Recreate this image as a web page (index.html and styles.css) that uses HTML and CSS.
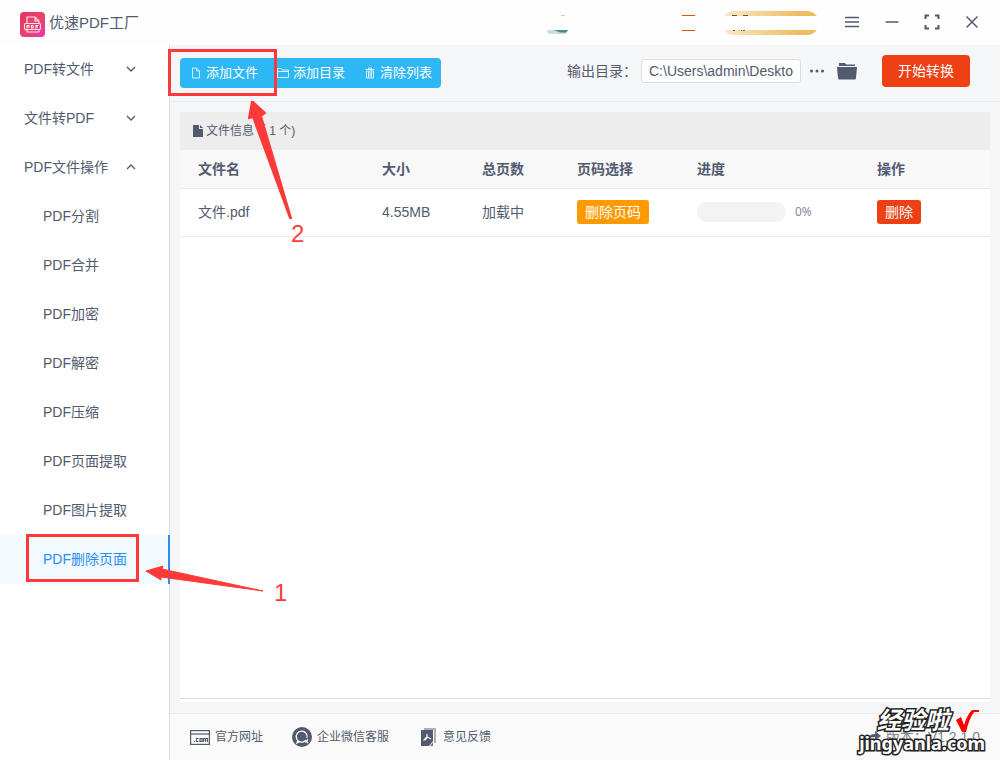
FILE: index.html
```html
<!DOCTYPE html>
<html lang="zh-CN">
<head>
<meta charset="utf-8">
<meta name="viewport" content="width=device-width, initial-scale=1">
<title>优速PDF工厂</title>
<link rel="stylesheet" href="styles.css">
</head>
<body>
<div class="app">
  <header class="titlebar">
    <svg class="logo" viewBox="0 0 25 25" aria-hidden="true">
      <defs><linearGradient id="lg" x1="0" y1="0" x2="1" y2="1"><stop offset="0" stop-color="#e5325f"/><stop offset=".55" stop-color="#e9446f"/><stop offset="1" stop-color="#ee35a8"/></linearGradient></defs>
      <rect width="25" height="25" rx="4" fill="url(#lg)"/>
      <g fill="none" stroke="#ffe3ea" stroke-width="1.1"><path d="M7 11V5h8l4 4v2M15 5v4h4M7 18v2h12v-2"/><rect x="4.500" y="11.500" width="16" height="6" rx="1"/><path d="M7 16.500v-3h2v1.500H7M11.500 13.500v2.500h1l1-1v-.5l-1-1zM16 16.500v-3h2.500M16 15h2"/></g>
    </svg>
    <h1 class="app-name">优速PDF工厂</h1>
    <div class="account">
      <svg class="avatar" viewBox="0 0 24 24" aria-hidden="true"><path d="M2 19h21q-1 4-4 4H6q-4 0-4-4z" fill="#c9dedf"/><path d="M2 19h7l11 2.500 3-2.500H8z" fill="#458e93"/><path d="M9 19h14l-2 2.500h-6z" fill="#458e93"/><path d="M16 4.500h4" stroke="#ccc"/></svg>
      <svg class="badge-lines" viewBox="0 0 14 24" aria-hidden="true"><path d="M1 4.500h13M1 19.500h13" stroke="#ec4a1c"/></svg>
      <span class="vip"><svg class="vip-mark" viewBox="0 0 24 24" aria-hidden="true"><path d="M2 4.500h5M13 4.500h5M3 19.500h2M11 19.500h1M13 19.500h2" stroke="#795033"/></svg></span>
    </div>
    <nav class="window-controls" aria-label="窗口">
      <button aria-label="菜单"><svg viewBox="0 0 16 16"><path d="M1 3.500h14M1 8h14M1 12.500h14"/></svg></button>
      <button aria-label="最小化"><svg viewBox="0 0 16 16"><path d="M1.500 8h13"/></svg></button>
      <button aria-label="最大化"><svg viewBox="0 0 16 16"><path stroke-width="2" d="M1.500 5V1.500H5M11 1.500h3.500V5M1.500 11v3.500H5M11 14.500h3.500V11"/></svg></button>
      <button aria-label="关闭"><svg viewBox="0 0 16 16"><path d="M2.500 2.500l11 11M13.500 2.500l-11 11"/></svg></button>
    </nav>
  </header>

  <aside class="sidebar">
    <button class="group">PDF转文件<svg viewBox="0 0 10 10"><path d="M1 3l4 4 4-4"/></svg></button>
    <button class="group">文件转PDF<svg viewBox="0 0 10 10"><path d="M1 3l4 4 4-4"/></svg></button>
    <button class="group" aria-expanded="true">PDF文件操作<svg viewBox="0 0 10 10"><path d="M1 7l4-4 4 4"/></svg></button>
    <nav class="submenu">
      <a href="#split">PDF分割</a>
      <a href="#merge">PDF合并</a>
      <a href="#encrypt">PDF加密</a>
      <a href="#decrypt">PDF解密</a>
      <a href="#compress">PDF压缩</a>
      <a href="#pages">PDF页面提取</a>
      <a href="#images">PDF图片提取</a>
      <a class="active" href="#delete" aria-current="page">PDF删除页面</a>
    </nav>
  </aside>

  <main class="workspace">
    <div class="toolbar">
      <div class="actions">
        <button><svg viewBox="0 0 12 12"><path d="M2.500 1h4l3 3v7h-7zM6.500 1v3h3"/></svg>添加文件</button>
        <button><svg viewBox="0 0 12 12"><path d="M.5 10.500V1.500h4l1 1.500h6v7.500zM.5 4.500h11"/></svg>添加目录</button>
        <button><svg viewBox="0 0 12 12"><path d="M1.500 2.500h9M4.500 2V1h3v1M2.500 4v7h7V4zM4.500 4.500v6M6 4.500v6M7.500 4.500v6"/></svg>清除列表</button>
      </div>
      <div class="output">
        <label for="dir">输出目录：</label>
        <input id="dir" type="text" value="C:\Users\admin\Deskto">
        <button class="more" aria-label="更多"><svg viewBox="0 0 16 16"><circle cx="2.500" cy="8" r="1.500"/><circle cx="8" cy="8" r="1.500"/><circle cx="13.500" cy="8" r="1.500"/></svg></button>
        <button class="folder" aria-label="打开文件夹"><svg viewBox="0 0 20 18"><path d="M2 4V1h6l1 1.500h9V4z"/><path d="M0 5h20l-1 11q0 1.500-1.500 1.500h-15Q1 17.500 1 16z"/></svg></button>
        <button class="start">开始转换</button>
      </div>
    </div>

    <section class="panel">
      <h2 class="panel-title"><svg viewBox="0 0 12 14"><path d="M1 1h6v4h4v8H1z"/><path d="M8 1l3 3H8z"/></svg>文件信息（ 1 个)</h2>
      <table class="files">
        <colgroup><col><col class="c-size"><col class="c-pages"><col class="c-range"><col class="c-progress"><col class="c-action"></colgroup>
        <thead><tr><th>文件名</th><th>大小</th><th>总页数</th><th>页码选择</th><th>进度</th><th>操作</th></tr></thead>
        <tbody><tr>
          <td>文件.pdf</td><td>4.55MB</td><td>加载中</td>
          <td><button class="tag orange">删除页码</button></td>
          <td><div class="progress"><span class="track"></span><span class="percent">0%</span></div></td>
          <td><button class="tag red">删除</button></td>
        </tr></tbody>
      </table>
    </section>

    <footer class="footer">
      <a href="#site"><svg viewBox="0 0 20 20"><g fill="none" stroke="#515a6e" stroke-width="1.200"><rect x=".6" y="3.600" width="18.800" height="13.800"/><path d="M1 7h18"/><path d="M4 14.500h1M8.500 11.500h-2v3h2M10 11.500h2v3h-2zM13.500 15v-3.500h4V15M15.500 11.500V15"/></g></svg>官方网址</a>
      <a href="#wechat"><svg viewBox="0 0 20 20"><circle cx="10" cy="10" r="10" fill="#515a6e"/><g fill="none" stroke="#fff" stroke-width="1.300"><path d="M13 14a5.500 5.500 0 1 1 2-3M6 13l-1 3 3-1.500"/><path d="M13 13l3 3M16 12.500l-2.500 3"/></g></svg>企业微信客服</a>
      <a href="#feedback"><svg viewBox="0 0 20 20"><path d="M6 2h11v14" fill="none" stroke="#9197a4" stroke-width="1.500"/><path d="M3 3h12v11l-4 5H3z" fill="#515a6e"/><path d="M15 15v4h-3z" fill="#737b8b"/><path d="M9 7v3q-1 3-3 3 2-2.500 3-3 2 .5 4 2" fill="none" stroke="#fff" stroke-width="1.200"/></svg>意见反馈</a>
      <span class="version"><svg viewBox="0 0 14 14" aria-hidden="true"><path d="M1 9q1-5 7-5V1l6 5-6 4V7Q4 7 1 9z"/></svg>版本：V1.2.1.0</span>
    </footer>
  </main>

  <div class="mark mark-add"></div>
  <div class="mark mark-delete"></div>
  <svg class="arrow arrow-two" viewBox="0 0 44 118" aria-hidden="true"><path d="M4 0L17 12l-4 3L43 117h-1L5 16l-4 1z"/></svg>
  <svg class="arrow arrow-one" viewBox="0 0 120 28" aria-hidden="true"><path d="M1 6L18 1l-1 3L118 26 16 12v3z"/></svg>
  <span class="step step-two">2</span>
  <span class="step step-one">1</span>
  <div class="watermark">
    <span class="wm-name">经验啦</span>
    <svg class="wm-check" viewBox="0 0 24 24" aria-hidden="true"><path d="M1 11l5-3 3 8Q12 6 17 1h7v2h-5Q14 10 11 23H7z"/></svg>
    <span class="wm-site">jingyanla.com</span>
  </div>
</div>
</body>
</html>
```
FILE: styles.css
```css
* { box-sizing: border-box; }
body {
  margin: 0;
  color: #515a6e;
  font: 14px/20px "Liberation Sans", "Noto Sans CJK SC", sans-serif;
}
button, input { font: inherit; color: inherit; }
button { border: 0; padding: 0; background: none; cursor: pointer; white-space: nowrap; }
a { color: inherit; text-decoration: none; }
svg { flex: none; }
.app {
  position: relative;
  min-height: 100vh;
  display: grid;
  grid-template: 45px 1fr / 170px minmax(0, 1fr);
  background: #fff;
}

.titlebar {
  grid-column: 1 / -1;
  display: flex;
  align-items: center;
  padding: 0 8px 0 20px;
  background: #fefefe;
}
.logo { width: 25px; height: 25px; margin-top: 3px; }
.app-name { margin: 0 auto 0 4px; font-size: 15px; font-weight: 400; }
.account { display: flex; align-items: center; padding-top: 1px; margin-right: 13px; }
.avatar { width: 24px; height: 24px; margin-right: 112px; }
.badge-lines { width: 14px; height: 24px; margin-right: 27px; }
.vip {
  width: 97px;
  height: 24px;
  border-radius: 12px;
  background: linear-gradient(#fff, #fff) 0 5px / 100% 14px no-repeat, linear-gradient(90deg, #fbe8ca, #edbd60 80%);
}
.vip-mark { display: block; width: 24px; height: 24px; margin-left: 8px; }
.window-controls { display: flex; padding-bottom: 2px; }
.window-controls button { width: 40px; height: 40px; display: grid; place-items: center; }
.window-controls svg { width: 16px; height: 16px; fill: none; stroke: #515a6e; stroke-width: 1.5; }

.sidebar { border-right: 1px solid #dcdee2; }
.group {
  width: 100%;
  height: 49px;
  padding: 0 33px 1px 24px;
  display: flex;
  align-items: center;
  justify-content: space-between;
}
.group svg { width: 10px; height: 10px; fill: none; stroke: #515a6e; stroke-width: 1.3; }
.submenu { display: grid; margin-right: -1px; }
.submenu a { height: 49px; padding-left: 43px; line-height: 49px; }
.submenu .active { color: #2d8cf0; background: #f0faff; border-right: 2px solid #2d8cf0; }

.workspace { display: flex; flex-direction: column; background: #f5f6f8; }
.toolbar {
  height: 57px;
  padding: 0 30px 0 10px;
  display: flex;
  justify-content: space-between;
  align-items: center;
  border-bottom: 1px solid #e8eaec;
}
.actions { display: grid; grid-template-columns: repeat(3, 1fr); border-radius: 4px; background: #2db7f5; color: #fff; }
.actions button { height: 30px; padding: 0 9px 0 10px; display: flex; align-items: center; gap: 4px; font-size: 13px; }
.actions svg { width: 12px; height: 12px; fill: none; stroke: #d5f1fd; }
.output { display: flex; align-items: center; padding-bottom: 4px; }
.output label { width: 74px; white-space: nowrap; }
.output input {
  width: 160px;
  height: 24px;
  padding: 0 7px;
  border: 1px solid #dcdee2;
  border-radius: 3px;
  background: #fff;
}
.more { margin-left: 8px; }
.more svg { display: block; width: 16px; height: 16px; fill: #515a6e; }
.folder { margin-left: 12px; }
.folder svg { display: block; width: 20px; height: 18px; fill: #515a6e; }
.start { width: 88px; height: 32px; margin-left: 25px; border-radius: 4px; background: #ed4014; color: #fff; }

.panel { flex: 1; margin: 10px 10px 11px; background: #fff; border-bottom: 3px solid #fff; box-shadow: inset 0 -1px #dcdee2; }
.panel-title {
  height: 38px;
  margin: 0;
  padding-left: 12px;
  display: flex;
  align-items: center;
  gap: 2px;
  background: #ededed;
  font-size: 12px;
  font-weight: 400;
}
.panel-title svg { width: 12px; height: 14px; fill: #515a6e; }
.files { width: 100%; table-layout: fixed; border-collapse: separate; border-spacing: 0; }
.c-size { width: 100px; }
.c-pages { width: 95px; }
.c-range { width: 120px; }
.c-progress { width: 180px; }
.c-action { width: 131px; }
.files th, .files td { padding: 0 0 0 18px; text-align: left; border-bottom: 1px solid #e8eaec; }
.files th { height: 39px; background: #f8f8f9; }
.files td { height: 48px; padding-bottom: 1px; }
.tag { display: block; height: 24px; padding: 0 8px; border-radius: 3px; color: #fff; }
.orange { background: #f90; }
.red { background: #ed4014; }
.progress { display: flex; align-items: center; gap: 9px; }
.track { width: 89px; height: 20px; border-radius: 10px; background: #f3f3f3; }
.percent { font: 12px/20px "Open Sans", sans-serif; color: #808695; }

.footer {
  height: 47px;
  padding: 0 20px;
  display: flex;
  align-items: center;
  gap: 29px;
  border-top: 1px solid #e8eaec;
  background: #fafafa;
  font-size: 12px;
}
.footer a { display: flex; align-items: center; gap: 5px; white-space: nowrap; }
.footer svg { width: 20px; height: 20px; }
.footer .version { margin-left: auto; display: flex; align-items: center; gap: 5px; font-size: 14px; color: #808695; }
.footer .version svg { width: 14px; height: 14px; fill: #515a6e; }

.mark { position: absolute; border: 3px solid #fc3a3a; pointer-events: none; }
.mark-add { left: 168px; top: 49px; width: 109px; height: 47px; }
.mark-delete { left: 26px; top: 534px; width: 113px; height: 48px; }
.arrow { position: absolute; fill: #fc3a3a; stroke: #fc3a3a; pointer-events: none; }
.arrow-two { left: 248px; top: 101px; width: 44px; height: 118px; }
.arrow-two path { stroke-width: 2; }
.arrow-one { left: 145px; top: 565px; width: 120px; height: 28px; }
.step { position: absolute; color: #fc3a3a; font: 24px/24px "Liberation Sans", sans-serif; }
.step-two { left: 291px; top: 222px; }
.step-one { left: 274px; top: 581px; }
.watermark {
  position: absolute;
  right: 15px;
  bottom: 7px;
  display: grid;
  grid-template-columns: 1fr auto;
  color: #fff;
  -webkit-text-stroke: 3px #222;
  paint-order: stroke fill;
  pointer-events: none;
}
.wm-name { justify-self: end; font-size: 24px; line-height: 24px; font-weight: 700; font-style: italic; }
.wm-check { width: 24px; height: 24px; margin: 0 6px 0 6px; fill: #f00; }
.wm-site { grid-column: 1 / -1; justify-self: end; font: 700 18px/20px "Noto Sans", sans-serif; }
```
